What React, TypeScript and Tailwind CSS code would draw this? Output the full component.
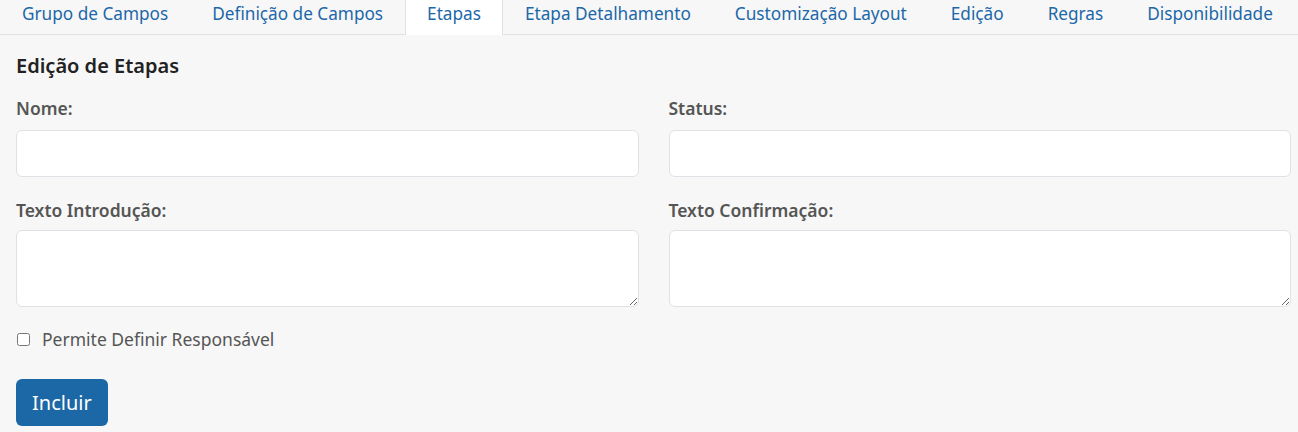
import React from "react";

const tabs = [
  "Grupo de Campos",
  "Definição de Campos",
  "Etapas",
  "Etapa Detalhamento",
  "Customização Layout",
  "Edição",
  "Regras",
  "Disponibilidade",
];

const App = () => {
  return (
    <div className="min-h-[432px] bg-[#f7f7f7] text-[#212529]" style={{ fontFamily: '"Noto Sans", sans-serif' }}>
      {/* abas */}
      <div className="flex border-b border-[#dee2e6]">
        {tabs.map((t) => (
          <div
            key={t}
            className={
              t === "Etapas"
                ? "shrink-0 whitespace-nowrap h-[35px] -mb-px px-[21px] pt-[2px] flex items-start text-[17.2px] leading-[24px] text-[#1c67a8] bg-white border-x border-[#dee2e6]"
                : "shrink-0 whitespace-nowrap h-[35px] -mb-px px-[21px] pt-[2px] flex items-start text-[17.2px] leading-[24px] text-[#1c67a8] border-x border-transparent"
            }
          >
            {t}
          </div>
        ))}
      </div>

      <div className="pl-4 pr-[7px] pt-[17px]">
        <h2 className="text-[20px] font-semibold text-[#222] leading-[28px]">Edição de Etapas</h2>

        <div className="grid grid-cols-2 gap-x-[30px] mt-[16px]">
          <div>
            <label className="block text-[17.5px] font-semibold text-[#555] leading-[24px]">Nome:</label>
            <input className="mt-[10px] block w-full h-[47px] bg-white border border-[#dee2e6] rounded-[6px]" />
          </div>
          <div>
            <label className="block text-[17.5px] font-semibold text-[#555] leading-[24px]">Status:</label>
            <input className="mt-[10px] block w-full h-[47px] bg-white border border-[#dee2e6] rounded-[6px]" />
          </div>
          <div className="mt-[21px]">
            <label className="block text-[17.5px] font-semibold text-[#555] leading-[24px]">Texto Introdução:</label>
            <textarea className="mt-[8px] block w-full h-[77px] bg-white border border-[#dee2e6] rounded-[6px]" />
          </div>
          <div className="mt-[21px]">
            <label className="block text-[17.5px] font-semibold text-[#555] leading-[24px]">Texto Confirmação:</label>
            <textarea className="mt-[8px] block w-full h-[77px] bg-white border border-[#dee2e6] rounded-[6px]" />
          </div>
        </div>

        <label className="flex items-center mt-[20px] text-[17.5px] text-[#555] leading-[24px]">
          <input type="checkbox" className="ml-px w-[13px] h-[13px] mr-[12px]" />
          Permite Definir Responsável
        </label>

        <button className="mt-[28px] h-[47px] px-4 rounded-[6px] bg-[#1c67a5] text-white text-[20px]">
          Incluir
        </button>
      </div>
    </div>
  );
};

export default App;
